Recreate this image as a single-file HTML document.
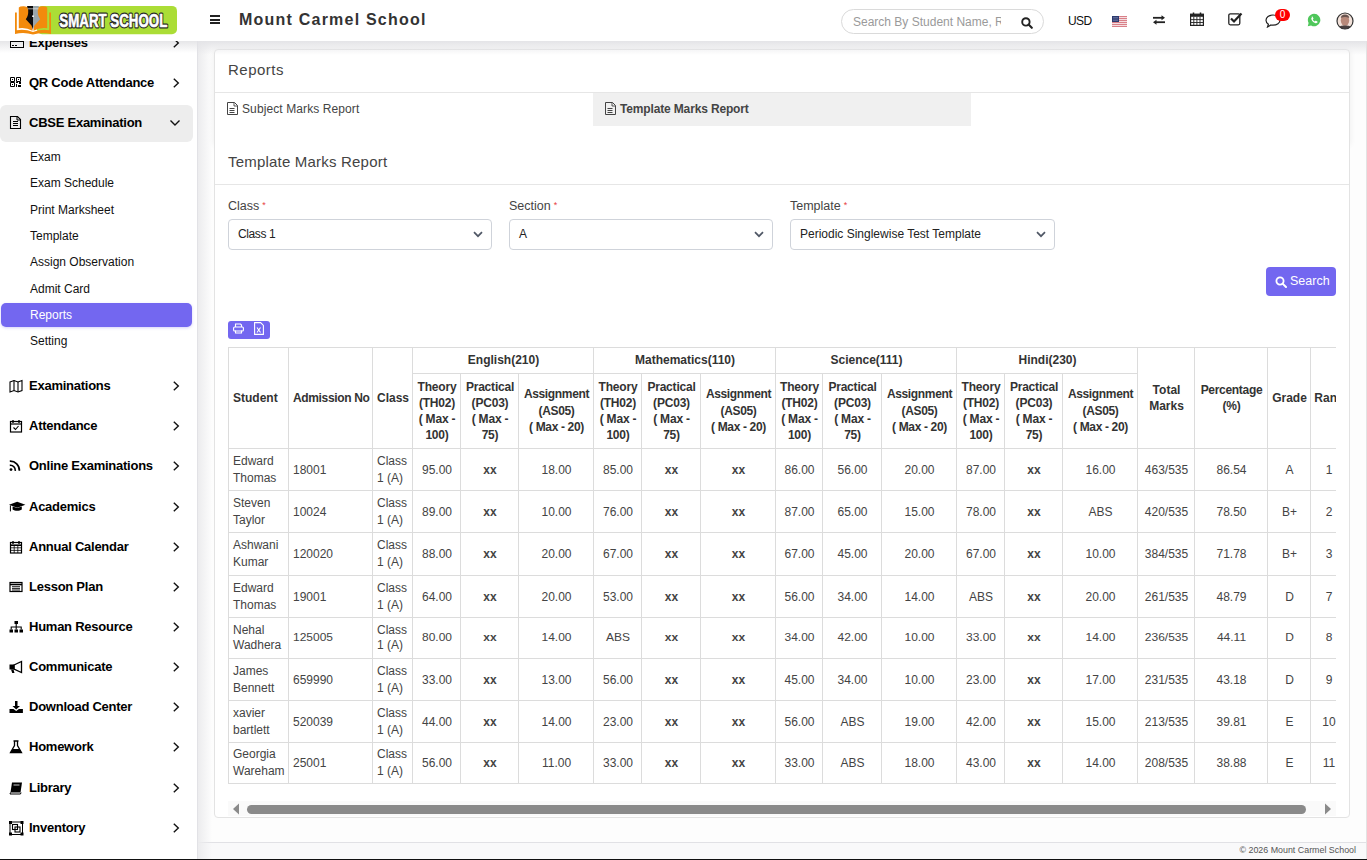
<!DOCTYPE html>
<html><head><meta charset="utf-8"><style>
*{box-sizing:border-box;margin:0;padding:0}
html,body{width:1367px;height:860px;overflow:hidden;background:#fdfdfd;font-family:"Liberation Sans",sans-serif;color:#333}
.a{position:absolute}
#hdr{position:absolute;left:0;top:0;width:1367px;height:41px;background:#fff;z-index:5}
#hdrsh{position:absolute;left:197px;top:41px;width:1170px;height:14px;background:linear-gradient(#e4e4e7,rgba(253,253,253,0));z-index:4}
#side{position:absolute;left:0;top:41px;width:197px;height:819px;background:#fff;z-index:3;overflow:hidden}
#sideb{position:absolute;left:197px;top:41px;width:1px;height:818px;background:#e2e2e6;z-index:4}
#sidesh{position:absolute;left:198px;top:41px;width:14px;height:818px;background:linear-gradient(90deg,#ececee,rgba(253,253,253,0));z-index:2}
#sidetopsh{position:absolute;left:0;top:0;width:197px;height:12px;background:linear-gradient(#e6e6e8,rgba(255,255,255,0))}
.mi{position:absolute;left:0;width:193px;height:37px;font-size:13px;font-weight:bold;color:#000;letter-spacing:-0.25px}
.mi svg.ic{position:absolute;left:9px;width:14px;height:14px}
.mi .tx{position:absolute;left:29px;line-height:16px;white-space:nowrap}
.mi svg.ch{position:absolute;left:172px;width:8px;height:10px}
.si{position:absolute;left:30px;font-size:12px;color:#111;line-height:15px;white-space:nowrap}
#box{position:absolute;left:214px;top:49px;width:1136px;height:769px;background:#fff;border:1px solid #e3e3e3;border-radius:4px;z-index:1}
#foot{position:absolute;left:198px;top:842px;width:1169px;height:17px;background:#f9f9fa;border-top:1px solid #e1e1e5;z-index:1}
#blk{position:absolute;left:0;top:859px;width:1367px;height:1px;background:#111;z-index:9}
</style></head><body>
<div id="hdr"><svg class="a" style="left:12px;top:3px" width="168" height="34" viewBox="0 0 168 34">
<rect x="25" y="2.9" width="140" height="28.3" rx="5" fill="#abdd36"/>
<path d="M3 9.5 L3 31 Q12 28.5 21 31.6 Q30 28.5 39 31 L39 9.5 L37.2 9.5 L37.2 27.2 Q29 25.8 21 29 Q13 25.8 4.8 27.2 L4.8 9.5 Z" fill="#f28a0c"/>
<path d="M6.8 4.5 Q8 3 12 3.2 Q17 3.6 19.5 7 L20.5 27.8 Q14 24 6.8 25.2 Z" fill="#f28a0c"/>
<path d="M35.2 4.5 Q34 3 30 3.2 Q25 3.6 22.5 7 L21.5 27.8 Q28 24 35.2 25.2 Z" fill="#f28a0c"/>
<path d="M15 3 H21 V26.5 L19.5 22.5 Q16 18.5 13.8 16.2 Q16.6 13 16.2 7 Z" fill="#0c0c0c"/>
<path d="M27 3 H21 V26.5 L22.5 22.5 Q26 18.5 28.2 16.2 Q25.4 13 25.8 7 Z" fill="#9aa6aa"/>
<path d="M15.5 5.8 H26.5" stroke="#e8e8e8" stroke-width="0.7"/>
<circle cx="21" cy="13.2" r="0.9" fill="#fff"/>
<text x="47.3" y="23.9" font-family="Liberation Sans" font-weight="bold" font-size="17.6" fill="#262626" stroke="#262626" stroke-width="3" stroke-linejoin="round" textLength="108" lengthAdjust="spacingAndGlyphs">SMART SCHOOL</text><text x="47.3" y="23.9" font-family="Liberation Sans" font-weight="bold" font-size="17.6" fill="#fff" stroke="#fff" stroke-width="0.6" stroke-linejoin="round" textLength="108" lengthAdjust="spacingAndGlyphs">SMART SCHOOL</text>
</svg><div class="a" style="left:210px;top:15px;width:10px;height:2px;background:#222"></div><div class="a" style="left:210px;top:18.5px;width:10px;height:2px;background:#222"></div><div class="a" style="left:210px;top:22px;width:10px;height:2px;background:#222"></div><div class="a" style="left:239px;top:11px;font-size:16px;font-weight:bold;letter-spacing:1.22px;color:#333;line-height:18px;white-space:nowrap">Mount Carmel School</div><div class="a" style="left:841px;top:9px;width:203px;height:25px;border:1px solid #dadada;border-radius:13px;background:#fff"></div><div class="a" style="left:853px;top:15px;width:148px;overflow:hidden;font-size:12px;color:#9a9a9a;line-height:15px;white-space:nowrap">Search By Student Name, Roll</div><svg class="a" style="left:1021px;top:17px" width="12" height="12" viewBox="0 0 12 12"><circle cx="4.9" cy="4.9" r="3.7" fill="none" stroke="#222" stroke-width="1.9"/><path d="M7.6 7.6 L10.8 10.8" stroke="#222" stroke-width="2.1" stroke-linecap="round"/></svg><div class="a" style="left:1068px;top:14px;font-size:12px;letter-spacing:-0.6px;color:#111;line-height:14px">USD</div><svg class="a" style="left:1112px;top:16px" width="15" height="11" viewBox="0 0 15 11"><rect x="0" y="0" width="15" height="1" fill="#d98088"/><rect x="0" y="1" width="15" height="1" fill="#f4dde0"/><rect x="0" y="2" width="15" height="1" fill="#d98088"/><rect x="0" y="3" width="15" height="1" fill="#f4dde0"/><rect x="0" y="4" width="15" height="1" fill="#d98088"/><rect x="0" y="5" width="15" height="1" fill="#f4dde0"/><rect x="0" y="6" width="15" height="1" fill="#d98088"/><rect x="0" y="7" width="15" height="1" fill="#f4dde0"/><rect x="0" y="8" width="15" height="1" fill="#d98088"/><rect x="0" y="9" width="15" height="1" fill="#f4dde0"/><rect x="0" y="10" width="15" height="1" fill="#d98088"/><rect x="0" y="11" width="15" height="1" fill="#f4dde0"/><rect x="0" y="0" width="7" height="6" fill="#2c3a6e"/><path d="M1 1.5h5M1 3h5M1 4.5h5" stroke="#8891b8" stroke-width="0.5"/></svg><svg class="a" style="left:1152px;top:15px" width="14" height="10" viewBox="0 0 14 10"><path d="M1 2.8h9" stroke="#222" stroke-width="1.8"/><path d="M9.5 0.3L13 2.8 9.5 5.3z" fill="#222"/><path d="M13 7.2h-9" stroke="#222" stroke-width="1.8"/><path d="M4.5 4.7L1 7.2 4.5 9.7z" fill="#222"/></svg><svg class="a" style="left:1190px;top:12px" width="14" height="14" viewBox="0 0 14 14"><rect x="0.6" y="2.2" width="12.8" height="11.2" fill="none" stroke="#222" stroke-width="1.2"/><rect x="0.6" y="2.2" width="12.8" height="2.6" fill="#222"/><path d="M3.5 0.5v3M10.5 0.5v3" stroke="#222" stroke-width="1.5"/><path d="M3.8 4.8v8.6M6.9 4.8v8.6M10 4.8v8.6M0.6 7.6h12.8M0.6 10.5h12.8" stroke="#222" stroke-width="0.9"/></svg><svg class="a" style="left:1228px;top:12px" width="15" height="14" viewBox="0 0 15 14"><rect x="0.8" y="1.8" width="11" height="11" rx="1.5" fill="none" stroke="#222" stroke-width="1.3"/><path d="M3 6.5l3 3 7.5-8" fill="none" stroke="#222" stroke-width="2.2"/></svg><svg class="a" style="left:1265px;top:13px" width="17" height="15" viewBox="0 0 17 15"><path d="M8 2C4 2 1 4.3 1 7.2c0 1.6 0.9 3 2.4 4L2.5 14 6 12c0.6 0.1 1.3 0.2 2 0.2 4 0 7-2.3 7-5S12 2 8 2z" fill="none" stroke="#222" stroke-width="1.2"/></svg><div class="a" style="left:1275px;top:9px;width:15px;height:12px;border-radius:6px;background:#ff0000;color:#fff;font-size:10px;line-height:12px;text-align:center">0</div><svg class="a" style="left:1307px;top:13px" width="14" height="14" viewBox="0 0 14 14"><path d="M7 0.8A6.2 6.2 0 0 0 1.6 10L0.8 13.2 4.1 12.4A6.2 6.2 0 1 0 7 0.8z" fill="#4fc75b"/><path d="M4.6 3.8c0.4-0.3 0.9-0.3 1.1 0.1l0.7 1.3c0.1 0.3 0 0.6-0.2 0.8l-0.4 0.4c0.4 0.9 1.1 1.6 2 2l0.4-0.4c0.2-0.2 0.5-0.3 0.8-0.2l1.3 0.7c0.4 0.2 0.4 0.7 0.1 1.1-0.6 0.7-1.4 0.9-2.3 0.5-1.6-0.7-2.9-2-3.6-3.6-0.4-0.9-0.2-1.8 0.5-2.3z" fill="#fff"/></svg><svg class="a" style="left:1336px;top:12px" width="18" height="18" viewBox="0 0 18 18"><defs><clipPath id="avc"><circle cx="9" cy="9" r="8"/></clipPath></defs><g clip-path="url(#avc)"><rect x="0" y="0" width="18" height="18" fill="#f3e2da"/><ellipse cx="9" cy="8.5" rx="4.2" ry="5.2" fill="#b8897a"/><path d="M4.8 6Q5 2.5 9 2.5Q13 2.5 13.2 6Q9 4.2 4.8 6z" fill="#6a5550"/><path d="M1 18Q2 13 9 13.5Q16 13 17 18z" fill="#4a4040"/></g><circle cx="9" cy="9" r="8" fill="none" stroke="#333" stroke-width="1.2"/></svg></div>
<div id="hdrsh"></div>
<div id="side"><div id="sidetopsh"></div><svg class="ic" style="position:absolute;left:9px;top:-5px;width:18px;height:14px;overflow:visible" viewBox="0 0 18 14"><rect x="1.5" y="5.5" width="13" height="6" fill="none" stroke="#000" stroke-width="1"/><path d="M3 9.5h2M6 9.5h2" stroke="#000" stroke-width="1"/></svg><div class="tx" style="position:absolute;left:29px;top:-6px;font-size:13px;font-weight:bold;color:#000;letter-spacing:-0.25px;line-height:16px;white-space:nowrap">Expenses</div><svg style="position:absolute;left:172px;top:-3px;width:8px;height:10px" viewBox="0 0 8 10"><path d="M1.8 0.7 L6.3 5 L1.8 9.3" fill="none" stroke="#111" stroke-width="1.4"/></svg><svg class="ic" style="position:absolute;left:9px;top:35px;width:18px;height:14px;overflow:visible" viewBox="0 0 18 14"><path d="M1.5 1.5h4v4h-4zM7.5 1.5h4v4h-4zM1.5 6.5h4v4h-4z" fill="none" stroke="#000" stroke-width="1"/><path d="M3 3h1v1H3zM9 3h1v1H9zM3 8h1v1H3zM7 6h2v1H7zM10 6h2v2h-2zM7 8h1v3H7zM9 9h3v2H9z" fill="#000"/></svg><div class="tx" style="position:absolute;left:29px;top:34px;font-size:13px;font-weight:bold;color:#000;letter-spacing:-0.25px;line-height:16px;white-space:nowrap">QR Code Attendance</div><svg style="position:absolute;left:172px;top:37px;width:8px;height:10px" viewBox="0 0 8 10"><path d="M1.8 0.7 L6.3 5 L1.8 9.3" fill="none" stroke="#111" stroke-width="1.4"/></svg><div class="a" style="left:0;top:64px;width:193px;height:37px;background:#ededed;border-radius:6px"></div><svg class="ic" style="position:absolute;left:9px;top:75px;width:18px;height:14px;overflow:visible" viewBox="0 0 18 14"><path d="M1.5 0.5h7l3 3v9h-10z" fill="none" stroke="#000" stroke-width="1.1"/><path d="M8 0.5v3.5h3.5" fill="none" stroke="#000" stroke-width="1"/><path d="M4 5.5h5M4 7.5h5M4 9.5h5" stroke="#000" stroke-width="1"/></svg><div class="tx" style="position:absolute;left:29px;top:74px;font-size:13px;font-weight:bold;color:#000;letter-spacing:-0.25px;line-height:16px;white-space:nowrap">CBSE Examination</div><svg style="position:absolute;left:169px;top:78px;width:12px;height:8px" viewBox="0 0 12 8"><path d="M1.5 1.5 L6 6 L10.5 1.5" fill="none" stroke="#111" stroke-width="1.4"/></svg><div class="a" style="left:30px;top:109px;font-size:12px;line-height:14px;color:#111;white-space:nowrap">Exam</div><div class="a" style="left:30px;top:135px;font-size:12px;line-height:14px;color:#111;white-space:nowrap">Exam Schedule</div><div class="a" style="left:30px;top:162px;font-size:12px;line-height:14px;color:#111;white-space:nowrap">Print Marksheet</div><div class="a" style="left:30px;top:188px;font-size:12px;line-height:14px;color:#111;white-space:nowrap">Template</div><div class="a" style="left:30px;top:214px;font-size:12px;line-height:14px;color:#111;white-space:nowrap">Assign Observation</div><div class="a" style="left:30px;top:241px;font-size:12px;line-height:14px;color:#111;white-space:nowrap">Admit Card</div><div class="a" style="left:1px;top:262px;width:191px;height:24px;background:#7367f0;border-radius:5px;box-shadow:0 1px 3px rgba(115,103,240,0.3)"></div><div class="a" style="left:30px;top:267px;font-size:12px;line-height:14px;color:#fff;white-space:nowrap">Reports</div><div class="a" style="left:30px;top:293px;font-size:12px;line-height:14px;color:#111;white-space:nowrap">Setting</div><svg class="ic" style="position:absolute;left:9px;top:338px;width:18px;height:14px;overflow:visible" viewBox="0 0 18 14"><path d="M1 3l4-1.5 4 1.5 4-1.5v10l-4 1.5-4-1.5-4 1.5z" fill="none" stroke="#000" stroke-width="1.1"/><path d="M5 1.5v10M9 3v10" stroke="#000" stroke-width="1.1"/></svg><div class="tx" style="position:absolute;left:29px;top:337px;font-size:13px;font-weight:bold;color:#000;letter-spacing:-0.25px;line-height:16px;white-space:nowrap">Examinations</div><svg style="position:absolute;left:172px;top:340px;width:8px;height:10px" viewBox="0 0 8 10"><path d="M1.8 0.7 L6.3 5 L1.8 9.3" fill="none" stroke="#111" stroke-width="1.4"/></svg><svg class="ic" style="position:absolute;left:9px;top:378px;width:18px;height:14px;overflow:visible" viewBox="0 0 18 14"><rect x="1.5" y="2.5" width="11" height="10.5" fill="none" stroke="#000" stroke-width="1.2"/><path d="M1.5 5h11" stroke="#000" stroke-width="1.2"/><path d="M4 1v3M10 1v3" stroke="#000" stroke-width="1.4"/><path d="M4.5 8.5l2 2 3-3.5" fill="none" stroke="#000" stroke-width="1.1"/></svg><div class="tx" style="position:absolute;left:29px;top:377px;font-size:13px;font-weight:bold;color:#000;letter-spacing:-0.25px;line-height:16px;white-space:nowrap">Attendance</div><svg style="position:absolute;left:172px;top:380px;width:8px;height:10px" viewBox="0 0 8 10"><path d="M1.8 0.7 L6.3 5 L1.8 9.3" fill="none" stroke="#111" stroke-width="1.4"/></svg><svg class="ic" style="position:absolute;left:9px;top:418px;width:18px;height:14px;overflow:visible" viewBox="0 0 18 14"><circle cx="2" cy="10.6" r="1.4" fill="#000"/><path d="M0.8 6.3a5 5 0 0 1 5.5 5.5" fill="none" stroke="#000" stroke-width="1.7"/><path d="M0.8 2.2a9.2 9.2 0 0 1 9.6 9.6" fill="none" stroke="#000" stroke-width="1.7"/></svg><div class="tx" style="position:absolute;left:29px;top:417px;font-size:13px;font-weight:bold;color:#000;letter-spacing:-0.25px;line-height:16px;white-space:nowrap">Online Examinations</div><svg style="position:absolute;left:172px;top:420px;width:8px;height:10px" viewBox="0 0 8 10"><path d="M1.8 0.7 L6.3 5 L1.8 9.3" fill="none" stroke="#111" stroke-width="1.4"/></svg><svg class="ic" style="position:absolute;left:9px;top:459px;width:18px;height:14px;overflow:visible" viewBox="0 0 18 14"><path d="M0 4.8L8.2 1.8 16.4 4.8 8.2 7.8z" fill="#000"/><path d="M3.6 6.4v3c2.4 1.8 6.8 1.8 9.2 0v-3l-4.6 1.7z" fill="#000"/><path d="M1.4 5.4v6" stroke="#000" stroke-width="1"/></svg><div class="tx" style="position:absolute;left:29px;top:458px;font-size:13px;font-weight:bold;color:#000;letter-spacing:-0.25px;line-height:16px;white-space:nowrap">Academics</div><svg style="position:absolute;left:172px;top:461px;width:8px;height:10px" viewBox="0 0 8 10"><path d="M1.8 0.7 L6.3 5 L1.8 9.3" fill="none" stroke="#111" stroke-width="1.4"/></svg><svg class="ic" style="position:absolute;left:9px;top:499px;width:18px;height:14px;overflow:visible" viewBox="0 0 18 14"><rect x="1.5" y="2.5" width="11" height="10.5" fill="none" stroke="#000" stroke-width="1.2"/><path d="M1.5 5.2h11" stroke="#000" stroke-width="1.6"/><path d="M4 1v3M10 1v3" stroke="#000" stroke-width="1.4"/><path d="M5.2 5v8M8.8 5v8M1.5 7.8h11M1.5 10.4h11" stroke="#000" stroke-width="0.8"/></svg><div class="tx" style="position:absolute;left:29px;top:498px;font-size:13px;font-weight:bold;color:#000;letter-spacing:-0.25px;line-height:16px;white-space:nowrap">Annual Calendar</div><svg style="position:absolute;left:172px;top:501px;width:8px;height:10px" viewBox="0 0 8 10"><path d="M1.8 0.7 L6.3 5 L1.8 9.3" fill="none" stroke="#111" stroke-width="1.4"/></svg><svg class="ic" style="position:absolute;left:9px;top:539px;width:18px;height:14px;overflow:visible" viewBox="0 0 18 14"><rect x="1" y="2.5" width="12" height="9" fill="none" stroke="#000" stroke-width="1.2"/><path d="M1 4.5h12" stroke="#000" stroke-width="1.6"/><path d="M3 6.7h8M3 8.4h8M3 10h8" stroke="#000" stroke-width="0.9"/></svg><div class="tx" style="position:absolute;left:29px;top:538px;font-size:13px;font-weight:bold;color:#000;letter-spacing:-0.25px;line-height:16px;white-space:nowrap">Lesson Plan</div><svg style="position:absolute;left:172px;top:541px;width:8px;height:10px" viewBox="0 0 8 10"><path d="M1.8 0.7 L6.3 5 L1.8 9.3" fill="none" stroke="#111" stroke-width="1.4"/></svg><svg class="ic" style="position:absolute;left:9px;top:579px;width:18px;height:14px;overflow:visible" viewBox="0 0 18 14"><rect x="5.5" y="1" width="3.5" height="3" fill="#000"/><rect x="0.5" y="9.5" width="3.5" height="3" fill="#000"/><rect x="5.5" y="9.5" width="3.5" height="3" fill="#000"/><rect x="10.5" y="9.5" width="3.5" height="3" fill="#000"/><path d="M7.2 4v5.5M2.2 9.5V7h10v2.5" fill="none" stroke="#000" stroke-width="1.1"/></svg><div class="tx" style="position:absolute;left:29px;top:578px;font-size:13px;font-weight:bold;color:#000;letter-spacing:-0.25px;line-height:16px;white-space:nowrap">Human Resource</div><svg style="position:absolute;left:172px;top:581px;width:8px;height:10px" viewBox="0 0 8 10"><path d="M1.8 0.7 L6.3 5 L1.8 9.3" fill="none" stroke="#111" stroke-width="1.4"/></svg><svg class="ic" style="position:absolute;left:9px;top:619px;width:18px;height:14px;overflow:visible" viewBox="0 0 18 14"><path d="M5 5l7.5-3.5v11L5 9z" fill="none" stroke="#000" stroke-width="1.3"/><path d="M0.5 4.5h5v5h-5z" fill="#000"/><path d="M2 9.5l1.2 3.5h2.3l-1-3.5z" fill="#000"/></svg><div class="tx" style="position:absolute;left:29px;top:618px;font-size:13px;font-weight:bold;color:#000;letter-spacing:-0.25px;line-height:16px;white-space:nowrap">Communicate</div><svg style="position:absolute;left:172px;top:621px;width:8px;height:10px" viewBox="0 0 8 10"><path d="M1.8 0.7 L6.3 5 L1.8 9.3" fill="none" stroke="#111" stroke-width="1.4"/></svg><svg class="ic" style="position:absolute;left:9px;top:659px;width:18px;height:14px;overflow:visible" viewBox="0 0 18 14"><path d="M6 1h2.5v5h2.5L7.2 9.5 3.5 6H6z" fill="#000"/><path d="M0.5 9h4l2.7 2 2.7-2h4v4h-13.4z" fill="#000"/></svg><div class="tx" style="position:absolute;left:29px;top:658px;font-size:13px;font-weight:bold;color:#000;letter-spacing:-0.25px;line-height:16px;white-space:nowrap">Download Center</div><svg style="position:absolute;left:172px;top:661px;width:8px;height:10px" viewBox="0 0 8 10"><path d="M1.8 0.7 L6.3 5 L1.8 9.3" fill="none" stroke="#111" stroke-width="1.4"/></svg><svg class="ic" style="position:absolute;left:9px;top:699px;width:18px;height:14px;overflow:visible" viewBox="0 0 18 14"><path d="M4.5 1h5M5.5 1v4.5L1.5 12.5h11l-4-7V1" fill="none" stroke="#000" stroke-width="1.3"/><path d="M3.5 9h7l2 3.5h-11z" fill="#000"/></svg><div class="tx" style="position:absolute;left:29px;top:698px;font-size:13px;font-weight:bold;color:#000;letter-spacing:-0.25px;line-height:16px;white-space:nowrap">Homework</div><svg style="position:absolute;left:172px;top:701px;width:8px;height:10px" viewBox="0 0 8 10"><path d="M1.8 0.7 L6.3 5 L1.8 9.3" fill="none" stroke="#111" stroke-width="1.4"/></svg><svg class="ic" style="position:absolute;left:9px;top:740px;width:18px;height:14px;overflow:visible" viewBox="0 0 18 14"><path d="M3 1.5h10l-1.5 10H1.5z" fill="#000"/><path d="M1.5 11.5l-0.5 1.5h10.5l0.5-1.5" fill="none" stroke="#000" stroke-width="1"/><path d="M4.5 4h6" stroke="#fff" stroke-width="0.8"/></svg><div class="tx" style="position:absolute;left:29px;top:739px;font-size:13px;font-weight:bold;color:#000;letter-spacing:-0.25px;line-height:16px;white-space:nowrap">Library</div><svg style="position:absolute;left:172px;top:742px;width:8px;height:10px" viewBox="0 0 8 10"><path d="M1.8 0.7 L6.3 5 L1.8 9.3" fill="none" stroke="#111" stroke-width="1.4"/></svg><svg class="ic" style="position:absolute;left:9px;top:780px;width:18px;height:14px;overflow:visible" viewBox="0 0 18 14"><rect x="1" y="1" width="12.5" height="12.5" fill="none" stroke="#000" stroke-width="1"/><rect x="3.5" y="3.5" width="5" height="5" fill="none" stroke="#000" stroke-width="1.1"/><rect x="6" y="6" width="5" height="5" fill="none" stroke="#000" stroke-width="1.1"/><path d="M0 0h3v3H0zM11.5 0h3v3h-3zM0 11.5h3v3H0zM11.5 11.5h3v3h-3z" fill="#000"/></svg><div class="tx" style="position:absolute;left:29px;top:779px;font-size:13px;font-weight:bold;color:#000;letter-spacing:-0.25px;line-height:16px;white-space:nowrap">Inventory</div><svg style="position:absolute;left:172px;top:782px;width:8px;height:10px" viewBox="0 0 8 10"><path d="M1.8 0.7 L6.3 5 L1.8 9.3" fill="none" stroke="#111" stroke-width="1.4"/></svg></div>
<div id="sideb"></div>
<div id="sidesh"></div>
<div id="box"></div><div class="a" style="left:214px;top:49px;width:1136px;height:96px;border-radius:4px;box-shadow:0 1px 6px rgba(0,0,0,0.07);z-index:0"></div><div class="a" style="left:228px;top:61px;font-size:15px;letter-spacing:0.5px;line-height:17px;color:#444;z-index:2">Reports</div><div class="a" style="left:215px;top:92px;width:1134px;height:1px;background:#e6e6e6;z-index:2"></div><svg class="a" style="left:227px;top:102px;z-index:2" width="11" height="13" viewBox="0 0 11 13"><path d="M0.5 0.5h7l3 3v9h-10z" fill="none" stroke="#444" stroke-width="1"/><path d="M7 0.5v3.5h3.5" fill="none" stroke="#444" stroke-width="0.9"/><path d="M2.5 6.5h5M2.5 8.5h5M2.5 10.5h5" stroke="#444" stroke-width="1"/></svg><div class="a" style="left:242px;top:102px;font-size:12px;line-height:14px;color:#444;z-index:2;letter-spacing:0.1px">Subject Marks Report</div><div class="a" style="left:593px;top:93px;width:378px;height:33px;background:#f0f0f0;z-index:2"></div><svg class="a" style="left:605px;top:102px;z-index:2" width="11" height="13" viewBox="0 0 11 13"><path d="M0.5 0.5h7l3 3v9h-10z" fill="none" stroke="#444" stroke-width="1"/><path d="M7 0.5v3.5h3.5" fill="none" stroke="#444" stroke-width="0.9"/><path d="M2.5 6.5h5M2.5 8.5h5M2.5 10.5h5" stroke="#444" stroke-width="1"/></svg><div class="a" style="left:620px;top:102px;font-size:12px;font-weight:bold;line-height:14px;color:#444;z-index:2;letter-spacing:-0.15px">Template Marks Report</div><div class="a" style="left:228px;top:153px;font-size:15px;line-height:17px;color:#444;z-index:2;letter-spacing:0.2px">Template Marks Report</div><div class="a" style="left:215px;top:184px;width:1134px;height:1px;background:#e6e6e6;z-index:2"></div><div class="a" style="left:228px;top:199px;font-size:12.5px;line-height:14px;color:#444;z-index:2;white-space:nowrap">Class<span style="color:#e64040;font-size:9px;position:relative;top:-2px;margin-left:3px">*</span></div><div class="a" style="left:228px;top:219px;width:264px;height:31px;border:1px solid #cfd3da;border-radius:4px;background:#fff;z-index:2"></div><div class="a" style="left:238px;top:227px;font-size:12px;line-height:14px;color:#222;z-index:2;white-space:nowrap;letter-spacing:-0.4px">Class 1</div><svg class="a" style="left:473px;top:231px;z-index:2" width="10" height="7" viewBox="0 0 10 7"><path d="M1 1.2L5 5.2 9 1.2" fill="none" stroke="#505866" stroke-width="1.7"/></svg><div class="a" style="left:509px;top:199px;font-size:12.5px;line-height:14px;color:#444;z-index:2;white-space:nowrap">Section<span style="color:#e64040;font-size:9px;position:relative;top:-2px;margin-left:3px">*</span></div><div class="a" style="left:509px;top:219px;width:264px;height:31px;border:1px solid #cfd3da;border-radius:4px;background:#fff;z-index:2"></div><div class="a" style="left:519px;top:227px;font-size:12px;line-height:14px;color:#222;z-index:2;white-space:nowrap;letter-spacing:0px">A</div><svg class="a" style="left:754px;top:231px;z-index:2" width="10" height="7" viewBox="0 0 10 7"><path d="M1 1.2L5 5.2 9 1.2" fill="none" stroke="#505866" stroke-width="1.7"/></svg><div class="a" style="left:790px;top:199px;font-size:12.5px;line-height:14px;color:#444;z-index:2;white-space:nowrap">Template<span style="color:#e64040;font-size:9px;position:relative;top:-2px;margin-left:3px">*</span></div><div class="a" style="left:790px;top:219px;width:265px;height:31px;border:1px solid #cfd3da;border-radius:4px;background:#fff;z-index:2"></div><div class="a" style="left:800px;top:227px;font-size:12px;line-height:14px;color:#222;z-index:2;white-space:nowrap;letter-spacing:0px">Periodic Singlewise Test Template</div><svg class="a" style="left:1036px;top:231px;z-index:2" width="10" height="7" viewBox="0 0 10 7"><path d="M1 1.2L5 5.2 9 1.2" fill="none" stroke="#505866" stroke-width="1.7"/></svg><div class="a" style="left:1266px;top:267px;width:70px;height:29px;background:#7367f0;border-radius:4px;z-index:2"></div><svg class="a" style="left:1275px;top:276px;z-index:3" width="12" height="12" viewBox="0 0 12 12"><circle cx="5" cy="5" r="3.6" fill="none" stroke="#fff" stroke-width="1.8"/><path d="M7.6 7.6L11 11" stroke="#fff" stroke-width="2" stroke-linecap="round"/></svg><div class="a" style="left:1290px;top:274px;font-size:12.5px;line-height:14px;color:#fff;z-index:3">Search</div><div class="a" style="left:228px;top:321px;width:42px;height:18px;background:#7367f0;border-radius:3px;z-index:2"></div><svg class="a" style="left:233px;top:323px;z-index:3" width="11" height="11" viewBox="0 0 11 11"><path d="M2.5 4V1h5l1 1v2" fill="none" stroke="#fff" stroke-width="1.1"/><rect x="0.6" y="4" width="9.8" height="4" rx="1" fill="none" stroke="#fff" stroke-width="1.1"/><path d="M2.5 7.5v2.5h6V7.5" fill="none" stroke="#fff" stroke-width="1.1"/></svg><svg class="a" style="left:254px;top:322px;z-index:3" width="10" height="13" viewBox="0 0 10 13"><path d="M0.6 0.6h6l2.8 2.8v9H0.6z" fill="none" stroke="#fff" stroke-width="1.1"/><path d="M3 5.5l3.5 5M6.5 5.5L3 10.5" stroke="#fff" stroke-width="1.1"/></svg>
<div class="a" style="left:228px;top:347px;width:1108px;height:437px;overflow:hidden;z-index:2"><div class="a" style="left:0px;top:0px;width:1122px;height:1px;background:#dcdcdc"></div><div class="a" style="left:184px;top:26px;width:725px;height:1px;background:#dcdcdc"></div><div class="a" style="left:0px;top:101px;width:1122px;height:1px;background:#dcdcdc"></div><div class="a" style="left:0px;top:143px;width:1122px;height:1px;background:#dcdcdc"></div><div class="a" style="left:0px;top:185px;width:1122px;height:1px;background:#dcdcdc"></div><div class="a" style="left:0px;top:228px;width:1122px;height:1px;background:#dcdcdc"></div><div class="a" style="left:0px;top:270px;width:1122px;height:1px;background:#dcdcdc"></div><div class="a" style="left:0px;top:311px;width:1122px;height:1px;background:#dcdcdc"></div><div class="a" style="left:0px;top:353px;width:1122px;height:1px;background:#dcdcdc"></div><div class="a" style="left:0px;top:395px;width:1122px;height:1px;background:#dcdcdc"></div><div class="a" style="left:0px;top:436px;width:1122px;height:1px;background:#dcdcdc"></div><div class="a" style="left:0px;top:0px;width:1px;height:437px;background:#dcdcdc"></div><div class="a" style="left:60px;top:0px;width:1px;height:437px;background:#dcdcdc"></div><div class="a" style="left:144px;top:0px;width:1px;height:437px;background:#dcdcdc"></div><div class="a" style="left:184px;top:0px;width:1px;height:437px;background:#dcdcdc"></div><div class="a" style="left:232px;top:26px;width:1px;height:411px;background:#dcdcdc"></div><div class="a" style="left:290px;top:26px;width:1px;height:411px;background:#dcdcdc"></div><div class="a" style="left:365px;top:0px;width:1px;height:437px;background:#dcdcdc"></div><div class="a" style="left:413px;top:26px;width:1px;height:411px;background:#dcdcdc"></div><div class="a" style="left:472px;top:26px;width:1px;height:411px;background:#dcdcdc"></div><div class="a" style="left:547px;top:0px;width:1px;height:437px;background:#dcdcdc"></div><div class="a" style="left:594px;top:26px;width:1px;height:411px;background:#dcdcdc"></div><div class="a" style="left:653px;top:26px;width:1px;height:411px;background:#dcdcdc"></div><div class="a" style="left:728px;top:0px;width:1px;height:437px;background:#dcdcdc"></div><div class="a" style="left:776px;top:26px;width:1px;height:411px;background:#dcdcdc"></div><div class="a" style="left:834px;top:26px;width:1px;height:411px;background:#dcdcdc"></div><div class="a" style="left:909px;top:0px;width:1px;height:437px;background:#dcdcdc"></div><div class="a" style="left:966px;top:0px;width:1px;height:437px;background:#dcdcdc"></div><div class="a" style="left:1039px;top:0px;width:1px;height:437px;background:#dcdcdc"></div><div class="a" style="left:1082px;top:0px;width:1px;height:437px;background:#dcdcdc"></div><div class="a" style="left:1122px;top:0px;width:1px;height:437px;background:#dcdcdc"></div><div class="a" style="left:5px;top:43.0px;width:55px;text-align:left;font-size:12px;line-height:16px;color:#333;font-weight:bold;white-space:nowrap">Student</div><div class="a" style="left:65px;top:43.0px;width:79px;text-align:left;font-size:12px;line-height:16px;color:#333;font-weight:bold;letter-spacing:-0.35px;white-space:nowrap">Admission No</div><div class="a" style="left:149px;top:43.0px;width:35px;text-align:left;font-size:12px;line-height:16px;color:#333;font-weight:bold;white-space:nowrap">Class</div><div class="a" style="left:185px;top:4.5px;width:181px;text-align:center;font-size:12px;line-height:16px;color:#333;font-weight:bold;white-space:nowrap">English(210)</div><div class="a" style="left:366px;top:4.5px;width:182px;text-align:center;font-size:12px;line-height:16px;color:#333;font-weight:bold;white-space:nowrap">Mathematics(110)</div><div class="a" style="left:548px;top:4.5px;width:181px;text-align:center;font-size:12px;line-height:16px;color:#333;font-weight:bold;white-space:nowrap">Science(111)</div><div class="a" style="left:729px;top:4.5px;width:181px;text-align:center;font-size:12px;line-height:16px;color:#333;font-weight:bold;white-space:nowrap">Hindi(230)</div><div class="a" style="left:185px;top:32.0px;width:48px;text-align:center;font-size:12px;line-height:16px;color:#333;font-weight:bold;letter-spacing:-0.2px;white-space:nowrap">Theory<br>(TH02)<br>( Max -<br>100)</div><div class="a" style="left:233px;top:32.0px;width:58px;text-align:center;font-size:12px;line-height:16px;color:#333;font-weight:bold;letter-spacing:-0.2px;white-space:nowrap">Practical<br>(PC03)<br>( Max -<br>75)</div><div class="a" style="left:291px;top:39.2px;width:75px;text-align:center;font-size:12px;line-height:16.5px;color:#333;font-weight:bold;letter-spacing:-0.35px;white-space:nowrap">Assignment<br>(AS05)<br>( Max - 20)</div><div class="a" style="left:366px;top:32.0px;width:48px;text-align:center;font-size:12px;line-height:16px;color:#333;font-weight:bold;letter-spacing:-0.2px;white-space:nowrap">Theory<br>(TH02)<br>( Max -<br>100)</div><div class="a" style="left:414px;top:32.0px;width:59px;text-align:center;font-size:12px;line-height:16px;color:#333;font-weight:bold;letter-spacing:-0.2px;white-space:nowrap">Practical<br>(PC03)<br>( Max -<br>75)</div><div class="a" style="left:473px;top:39.2px;width:75px;text-align:center;font-size:12px;line-height:16.5px;color:#333;font-weight:bold;letter-spacing:-0.35px;white-space:nowrap">Assignment<br>(AS05)<br>( Max - 20)</div><div class="a" style="left:548px;top:32.0px;width:47px;text-align:center;font-size:12px;line-height:16px;color:#333;font-weight:bold;letter-spacing:-0.2px;white-space:nowrap">Theory<br>(TH02)<br>( Max -<br>100)</div><div class="a" style="left:595px;top:32.0px;width:59px;text-align:center;font-size:12px;line-height:16px;color:#333;font-weight:bold;letter-spacing:-0.2px;white-space:nowrap">Practical<br>(PC03)<br>( Max -<br>75)</div><div class="a" style="left:654px;top:39.2px;width:75px;text-align:center;font-size:12px;line-height:16.5px;color:#333;font-weight:bold;letter-spacing:-0.35px;white-space:nowrap">Assignment<br>(AS05)<br>( Max - 20)</div><div class="a" style="left:729px;top:32.0px;width:48px;text-align:center;font-size:12px;line-height:16px;color:#333;font-weight:bold;letter-spacing:-0.2px;white-space:nowrap">Theory<br>(TH02)<br>( Max -<br>100)</div><div class="a" style="left:777px;top:32.0px;width:58px;text-align:center;font-size:12px;line-height:16px;color:#333;font-weight:bold;letter-spacing:-0.2px;white-space:nowrap">Practical<br>(PC03)<br>( Max -<br>75)</div><div class="a" style="left:835px;top:39.2px;width:75px;text-align:center;font-size:12px;line-height:16.5px;color:#333;font-weight:bold;letter-spacing:-0.35px;white-space:nowrap">Assignment<br>(AS05)<br>( Max - 20)</div><div class="a" style="left:910px;top:35.0px;width:57px;text-align:center;font-size:12px;line-height:16px;color:#333;font-weight:bold;white-space:nowrap">Total<br>Marks</div><div class="a" style="left:967px;top:35.0px;width:73px;text-align:center;font-size:12px;line-height:16px;color:#333;font-weight:bold;letter-spacing:-0.3px;white-space:nowrap">Percentage<br>(%)</div><div class="a" style="left:1040px;top:43.0px;width:43px;text-align:center;font-size:12px;line-height:16px;color:#333;font-weight:bold;white-space:nowrap">Grade</div><div class="a" style="left:1083px;top:43.0px;width:36px;text-align:center;font-size:12px;line-height:16px;color:#333;font-weight:bold;white-space:nowrap">Rank</div><div class="a" style="left:5px;top:105.5px;width:55px;text-align:left;font-size:12px;line-height:17px;color:#444;white-space:nowrap">Edward<br>Thomas</div><div class="a" style="left:65px;top:114.5px;width:79px;text-align:left;font-size:12px;line-height:16px;color:#444;white-space:nowrap">18001</div><div class="a" style="left:149px;top:105.5px;width:35px;text-align:left;font-size:12px;line-height:17px;color:#444;white-space:nowrap">Class<br>1 (A)</div><div class="a" style="left:185px;top:114.5px;width:48px;text-align:center;font-size:12px;line-height:16px;color:#444;white-space:nowrap">95.00</div><div class="a" style="left:233px;top:114.5px;width:58px;text-align:center;font-size:12px;line-height:16px;color:#444;font-weight:bold;white-space:nowrap">xx</div><div class="a" style="left:291px;top:114.5px;width:75px;text-align:center;font-size:12px;line-height:16px;color:#444;white-space:nowrap">18.00</div><div class="a" style="left:366px;top:114.5px;width:48px;text-align:center;font-size:12px;line-height:16px;color:#444;white-space:nowrap">85.00</div><div class="a" style="left:414px;top:114.5px;width:59px;text-align:center;font-size:12px;line-height:16px;color:#444;font-weight:bold;white-space:nowrap">xx</div><div class="a" style="left:473px;top:114.5px;width:75px;text-align:center;font-size:12px;line-height:16px;color:#444;font-weight:bold;white-space:nowrap">xx</div><div class="a" style="left:548px;top:114.5px;width:47px;text-align:center;font-size:12px;line-height:16px;color:#444;white-space:nowrap">86.00</div><div class="a" style="left:595px;top:114.5px;width:59px;text-align:center;font-size:12px;line-height:16px;color:#444;white-space:nowrap">56.00</div><div class="a" style="left:654px;top:114.5px;width:75px;text-align:center;font-size:12px;line-height:16px;color:#444;white-space:nowrap">20.00</div><div class="a" style="left:729px;top:114.5px;width:48px;text-align:center;font-size:12px;line-height:16px;color:#444;white-space:nowrap">87.00</div><div class="a" style="left:777px;top:114.5px;width:58px;text-align:center;font-size:12px;line-height:16px;color:#444;font-weight:bold;white-space:nowrap">xx</div><div class="a" style="left:835px;top:114.5px;width:75px;text-align:center;font-size:12px;line-height:16px;color:#444;white-space:nowrap">16.00</div><div class="a" style="left:910px;top:114.5px;width:57px;text-align:center;font-size:12px;line-height:16px;color:#444;white-space:nowrap">463/535</div><div class="a" style="left:967px;top:114.5px;width:73px;text-align:center;font-size:12px;line-height:16px;color:#444;white-space:nowrap">86.54</div><div class="a" style="left:1040px;top:114.5px;width:43px;text-align:center;font-size:12px;line-height:16px;color:#444;white-space:nowrap">A</div><div class="a" style="left:1083px;top:114.5px;width:36px;text-align:center;font-size:12px;line-height:16px;color:#444;white-space:nowrap">1</div><div class="a" style="left:5px;top:147.5px;width:55px;text-align:left;font-size:12px;line-height:17px;color:#444;white-space:nowrap">Steven<br>Taylor</div><div class="a" style="left:65px;top:156.5px;width:79px;text-align:left;font-size:12px;line-height:16px;color:#444;white-space:nowrap">10024</div><div class="a" style="left:149px;top:147.5px;width:35px;text-align:left;font-size:12px;line-height:17px;color:#444;white-space:nowrap">Class<br>1 (A)</div><div class="a" style="left:185px;top:156.5px;width:48px;text-align:center;font-size:12px;line-height:16px;color:#444;white-space:nowrap">89.00</div><div class="a" style="left:233px;top:156.5px;width:58px;text-align:center;font-size:12px;line-height:16px;color:#444;font-weight:bold;white-space:nowrap">xx</div><div class="a" style="left:291px;top:156.5px;width:75px;text-align:center;font-size:12px;line-height:16px;color:#444;white-space:nowrap">10.00</div><div class="a" style="left:366px;top:156.5px;width:48px;text-align:center;font-size:12px;line-height:16px;color:#444;white-space:nowrap">76.00</div><div class="a" style="left:414px;top:156.5px;width:59px;text-align:center;font-size:12px;line-height:16px;color:#444;font-weight:bold;white-space:nowrap">xx</div><div class="a" style="left:473px;top:156.5px;width:75px;text-align:center;font-size:12px;line-height:16px;color:#444;font-weight:bold;white-space:nowrap">xx</div><div class="a" style="left:548px;top:156.5px;width:47px;text-align:center;font-size:12px;line-height:16px;color:#444;white-space:nowrap">87.00</div><div class="a" style="left:595px;top:156.5px;width:59px;text-align:center;font-size:12px;line-height:16px;color:#444;white-space:nowrap">65.00</div><div class="a" style="left:654px;top:156.5px;width:75px;text-align:center;font-size:12px;line-height:16px;color:#444;white-space:nowrap">15.00</div><div class="a" style="left:729px;top:156.5px;width:48px;text-align:center;font-size:12px;line-height:16px;color:#444;white-space:nowrap">78.00</div><div class="a" style="left:777px;top:156.5px;width:58px;text-align:center;font-size:12px;line-height:16px;color:#444;font-weight:bold;white-space:nowrap">xx</div><div class="a" style="left:835px;top:156.5px;width:75px;text-align:center;font-size:12px;line-height:16px;color:#444;white-space:nowrap">ABS</div><div class="a" style="left:910px;top:156.5px;width:57px;text-align:center;font-size:12px;line-height:16px;color:#444;white-space:nowrap">420/535</div><div class="a" style="left:967px;top:156.5px;width:73px;text-align:center;font-size:12px;line-height:16px;color:#444;white-space:nowrap">78.50</div><div class="a" style="left:1040px;top:156.5px;width:43px;text-align:center;font-size:12px;line-height:16px;color:#444;white-space:nowrap">B+</div><div class="a" style="left:1083px;top:156.5px;width:36px;text-align:center;font-size:12px;line-height:16px;color:#444;white-space:nowrap">2</div><div class="a" style="left:5px;top:190.0px;width:55px;text-align:left;font-size:12px;line-height:17px;color:#444;white-space:nowrap">Ashwani<br>Kumar</div><div class="a" style="left:65px;top:199.0px;width:79px;text-align:left;font-size:12px;line-height:16px;color:#444;white-space:nowrap">120020</div><div class="a" style="left:149px;top:190.0px;width:35px;text-align:left;font-size:12px;line-height:17px;color:#444;white-space:nowrap">Class<br>1 (A)</div><div class="a" style="left:185px;top:199.0px;width:48px;text-align:center;font-size:12px;line-height:16px;color:#444;white-space:nowrap">88.00</div><div class="a" style="left:233px;top:199.0px;width:58px;text-align:center;font-size:12px;line-height:16px;color:#444;font-weight:bold;white-space:nowrap">xx</div><div class="a" style="left:291px;top:199.0px;width:75px;text-align:center;font-size:12px;line-height:16px;color:#444;white-space:nowrap">20.00</div><div class="a" style="left:366px;top:199.0px;width:48px;text-align:center;font-size:12px;line-height:16px;color:#444;white-space:nowrap">67.00</div><div class="a" style="left:414px;top:199.0px;width:59px;text-align:center;font-size:12px;line-height:16px;color:#444;font-weight:bold;white-space:nowrap">xx</div><div class="a" style="left:473px;top:199.0px;width:75px;text-align:center;font-size:12px;line-height:16px;color:#444;font-weight:bold;white-space:nowrap">xx</div><div class="a" style="left:548px;top:199.0px;width:47px;text-align:center;font-size:12px;line-height:16px;color:#444;white-space:nowrap">67.00</div><div class="a" style="left:595px;top:199.0px;width:59px;text-align:center;font-size:12px;line-height:16px;color:#444;white-space:nowrap">45.00</div><div class="a" style="left:654px;top:199.0px;width:75px;text-align:center;font-size:12px;line-height:16px;color:#444;white-space:nowrap">20.00</div><div class="a" style="left:729px;top:199.0px;width:48px;text-align:center;font-size:12px;line-height:16px;color:#444;white-space:nowrap">67.00</div><div class="a" style="left:777px;top:199.0px;width:58px;text-align:center;font-size:12px;line-height:16px;color:#444;font-weight:bold;white-space:nowrap">xx</div><div class="a" style="left:835px;top:199.0px;width:75px;text-align:center;font-size:12px;line-height:16px;color:#444;white-space:nowrap">10.00</div><div class="a" style="left:910px;top:199.0px;width:57px;text-align:center;font-size:12px;line-height:16px;color:#444;white-space:nowrap">384/535</div><div class="a" style="left:967px;top:199.0px;width:73px;text-align:center;font-size:12px;line-height:16px;color:#444;white-space:nowrap">71.78</div><div class="a" style="left:1040px;top:199.0px;width:43px;text-align:center;font-size:12px;line-height:16px;color:#444;white-space:nowrap">B+</div><div class="a" style="left:1083px;top:199.0px;width:36px;text-align:center;font-size:12px;line-height:16px;color:#444;white-space:nowrap">3</div><div class="a" style="left:5px;top:232.5px;width:55px;text-align:left;font-size:12px;line-height:17px;color:#444;white-space:nowrap">Edward<br>Thomas</div><div class="a" style="left:65px;top:241.5px;width:79px;text-align:left;font-size:12px;line-height:16px;color:#444;white-space:nowrap">19001</div><div class="a" style="left:149px;top:232.5px;width:35px;text-align:left;font-size:12px;line-height:17px;color:#444;white-space:nowrap">Class<br>1 (A)</div><div class="a" style="left:185px;top:241.5px;width:48px;text-align:center;font-size:12px;line-height:16px;color:#444;white-space:nowrap">64.00</div><div class="a" style="left:233px;top:241.5px;width:58px;text-align:center;font-size:12px;line-height:16px;color:#444;font-weight:bold;white-space:nowrap">xx</div><div class="a" style="left:291px;top:241.5px;width:75px;text-align:center;font-size:12px;line-height:16px;color:#444;white-space:nowrap">20.00</div><div class="a" style="left:366px;top:241.5px;width:48px;text-align:center;font-size:12px;line-height:16px;color:#444;white-space:nowrap">53.00</div><div class="a" style="left:414px;top:241.5px;width:59px;text-align:center;font-size:12px;line-height:16px;color:#444;font-weight:bold;white-space:nowrap">xx</div><div class="a" style="left:473px;top:241.5px;width:75px;text-align:center;font-size:12px;line-height:16px;color:#444;font-weight:bold;white-space:nowrap">xx</div><div class="a" style="left:548px;top:241.5px;width:47px;text-align:center;font-size:12px;line-height:16px;color:#444;white-space:nowrap">56.00</div><div class="a" style="left:595px;top:241.5px;width:59px;text-align:center;font-size:12px;line-height:16px;color:#444;white-space:nowrap">34.00</div><div class="a" style="left:654px;top:241.5px;width:75px;text-align:center;font-size:12px;line-height:16px;color:#444;white-space:nowrap">14.00</div><div class="a" style="left:729px;top:241.5px;width:48px;text-align:center;font-size:12px;line-height:16px;color:#444;white-space:nowrap">ABS</div><div class="a" style="left:777px;top:241.5px;width:58px;text-align:center;font-size:12px;line-height:16px;color:#444;font-weight:bold;white-space:nowrap">xx</div><div class="a" style="left:835px;top:241.5px;width:75px;text-align:center;font-size:12px;line-height:16px;color:#444;white-space:nowrap">20.00</div><div class="a" style="left:910px;top:241.5px;width:57px;text-align:center;font-size:12px;line-height:16px;color:#444;white-space:nowrap">261/535</div><div class="a" style="left:967px;top:241.5px;width:73px;text-align:center;font-size:12px;line-height:16px;color:#444;white-space:nowrap">48.79</div><div class="a" style="left:1040px;top:241.5px;width:43px;text-align:center;font-size:12px;line-height:16px;color:#444;white-space:nowrap">D</div><div class="a" style="left:1083px;top:241.5px;width:36px;text-align:center;font-size:12px;line-height:16px;color:#444;white-space:nowrap">7</div><div class="a" style="left:5px;top:276.3px;width:55px;text-align:left;font-size:12px;line-height:14.7px;color:#444;white-space:nowrap">Nehal<br>Wadhera</div><div class="a" style="left:65px;top:283.0px;width:79px;text-align:left;font-size:12px;line-height:16px;color:#444;transform:scaleY(0.86);white-space:nowrap">125005</div><div class="a" style="left:149px;top:276.3px;width:35px;text-align:left;font-size:12px;line-height:14.7px;color:#444;white-space:nowrap">Class<br>1 (A)</div><div class="a" style="left:185px;top:283.0px;width:48px;text-align:center;font-size:12px;line-height:16px;color:#444;transform:scaleY(0.86);white-space:nowrap">80.00</div><div class="a" style="left:233px;top:283.0px;width:58px;text-align:center;font-size:12px;line-height:16px;color:#444;font-weight:bold;transform:scaleY(0.86);white-space:nowrap">xx</div><div class="a" style="left:291px;top:283.0px;width:75px;text-align:center;font-size:12px;line-height:16px;color:#444;transform:scaleY(0.86);white-space:nowrap">14.00</div><div class="a" style="left:366px;top:283.0px;width:48px;text-align:center;font-size:12px;line-height:16px;color:#444;transform:scaleY(0.86);white-space:nowrap">ABS</div><div class="a" style="left:414px;top:283.0px;width:59px;text-align:center;font-size:12px;line-height:16px;color:#444;font-weight:bold;transform:scaleY(0.86);white-space:nowrap">xx</div><div class="a" style="left:473px;top:283.0px;width:75px;text-align:center;font-size:12px;line-height:16px;color:#444;font-weight:bold;transform:scaleY(0.86);white-space:nowrap">xx</div><div class="a" style="left:548px;top:283.0px;width:47px;text-align:center;font-size:12px;line-height:16px;color:#444;transform:scaleY(0.86);white-space:nowrap">34.00</div><div class="a" style="left:595px;top:283.0px;width:59px;text-align:center;font-size:12px;line-height:16px;color:#444;transform:scaleY(0.86);white-space:nowrap">42.00</div><div class="a" style="left:654px;top:283.0px;width:75px;text-align:center;font-size:12px;line-height:16px;color:#444;transform:scaleY(0.86);white-space:nowrap">10.00</div><div class="a" style="left:729px;top:283.0px;width:48px;text-align:center;font-size:12px;line-height:16px;color:#444;transform:scaleY(0.86);white-space:nowrap">33.00</div><div class="a" style="left:777px;top:283.0px;width:58px;text-align:center;font-size:12px;line-height:16px;color:#444;font-weight:bold;transform:scaleY(0.86);white-space:nowrap">xx</div><div class="a" style="left:835px;top:283.0px;width:75px;text-align:center;font-size:12px;line-height:16px;color:#444;transform:scaleY(0.86);white-space:nowrap">14.00</div><div class="a" style="left:910px;top:283.0px;width:57px;text-align:center;font-size:12px;line-height:16px;color:#444;transform:scaleY(0.86);white-space:nowrap">236/535</div><div class="a" style="left:967px;top:283.0px;width:73px;text-align:center;font-size:12px;line-height:16px;color:#444;transform:scaleY(0.86);white-space:nowrap">44.11</div><div class="a" style="left:1040px;top:283.0px;width:43px;text-align:center;font-size:12px;line-height:16px;color:#444;transform:scaleY(0.86);white-space:nowrap">D</div><div class="a" style="left:1083px;top:283.0px;width:36px;text-align:center;font-size:12px;line-height:16px;color:#444;transform:scaleY(0.86);white-space:nowrap">8</div><div class="a" style="left:5px;top:315.5px;width:55px;text-align:left;font-size:12px;line-height:17px;color:#444;white-space:nowrap">James<br>Bennett</div><div class="a" style="left:65px;top:324.5px;width:79px;text-align:left;font-size:12px;line-height:16px;color:#444;white-space:nowrap">659990</div><div class="a" style="left:149px;top:315.5px;width:35px;text-align:left;font-size:12px;line-height:17px;color:#444;white-space:nowrap">Class<br>1 (A)</div><div class="a" style="left:185px;top:324.5px;width:48px;text-align:center;font-size:12px;line-height:16px;color:#444;white-space:nowrap">33.00</div><div class="a" style="left:233px;top:324.5px;width:58px;text-align:center;font-size:12px;line-height:16px;color:#444;font-weight:bold;white-space:nowrap">xx</div><div class="a" style="left:291px;top:324.5px;width:75px;text-align:center;font-size:12px;line-height:16px;color:#444;white-space:nowrap">13.00</div><div class="a" style="left:366px;top:324.5px;width:48px;text-align:center;font-size:12px;line-height:16px;color:#444;white-space:nowrap">56.00</div><div class="a" style="left:414px;top:324.5px;width:59px;text-align:center;font-size:12px;line-height:16px;color:#444;font-weight:bold;white-space:nowrap">xx</div><div class="a" style="left:473px;top:324.5px;width:75px;text-align:center;font-size:12px;line-height:16px;color:#444;font-weight:bold;white-space:nowrap">xx</div><div class="a" style="left:548px;top:324.5px;width:47px;text-align:center;font-size:12px;line-height:16px;color:#444;white-space:nowrap">45.00</div><div class="a" style="left:595px;top:324.5px;width:59px;text-align:center;font-size:12px;line-height:16px;color:#444;white-space:nowrap">34.00</div><div class="a" style="left:654px;top:324.5px;width:75px;text-align:center;font-size:12px;line-height:16px;color:#444;white-space:nowrap">10.00</div><div class="a" style="left:729px;top:324.5px;width:48px;text-align:center;font-size:12px;line-height:16px;color:#444;white-space:nowrap">23.00</div><div class="a" style="left:777px;top:324.5px;width:58px;text-align:center;font-size:12px;line-height:16px;color:#444;font-weight:bold;white-space:nowrap">xx</div><div class="a" style="left:835px;top:324.5px;width:75px;text-align:center;font-size:12px;line-height:16px;color:#444;white-space:nowrap">17.00</div><div class="a" style="left:910px;top:324.5px;width:57px;text-align:center;font-size:12px;line-height:16px;color:#444;white-space:nowrap">231/535</div><div class="a" style="left:967px;top:324.5px;width:73px;text-align:center;font-size:12px;line-height:16px;color:#444;white-space:nowrap">43.18</div><div class="a" style="left:1040px;top:324.5px;width:43px;text-align:center;font-size:12px;line-height:16px;color:#444;white-space:nowrap">D</div><div class="a" style="left:1083px;top:324.5px;width:36px;text-align:center;font-size:12px;line-height:16px;color:#444;white-space:nowrap">9</div><div class="a" style="left:5px;top:357.5px;width:55px;text-align:left;font-size:12px;line-height:17px;color:#444;white-space:nowrap">xavier<br>bartlett</div><div class="a" style="left:65px;top:366.5px;width:79px;text-align:left;font-size:12px;line-height:16px;color:#444;white-space:nowrap">520039</div><div class="a" style="left:149px;top:357.5px;width:35px;text-align:left;font-size:12px;line-height:17px;color:#444;white-space:nowrap">Class<br>1 (A)</div><div class="a" style="left:185px;top:366.5px;width:48px;text-align:center;font-size:12px;line-height:16px;color:#444;white-space:nowrap">44.00</div><div class="a" style="left:233px;top:366.5px;width:58px;text-align:center;font-size:12px;line-height:16px;color:#444;font-weight:bold;white-space:nowrap">xx</div><div class="a" style="left:291px;top:366.5px;width:75px;text-align:center;font-size:12px;line-height:16px;color:#444;white-space:nowrap">14.00</div><div class="a" style="left:366px;top:366.5px;width:48px;text-align:center;font-size:12px;line-height:16px;color:#444;white-space:nowrap">23.00</div><div class="a" style="left:414px;top:366.5px;width:59px;text-align:center;font-size:12px;line-height:16px;color:#444;font-weight:bold;white-space:nowrap">xx</div><div class="a" style="left:473px;top:366.5px;width:75px;text-align:center;font-size:12px;line-height:16px;color:#444;font-weight:bold;white-space:nowrap">xx</div><div class="a" style="left:548px;top:366.5px;width:47px;text-align:center;font-size:12px;line-height:16px;color:#444;white-space:nowrap">56.00</div><div class="a" style="left:595px;top:366.5px;width:59px;text-align:center;font-size:12px;line-height:16px;color:#444;white-space:nowrap">ABS</div><div class="a" style="left:654px;top:366.5px;width:75px;text-align:center;font-size:12px;line-height:16px;color:#444;white-space:nowrap">19.00</div><div class="a" style="left:729px;top:366.5px;width:48px;text-align:center;font-size:12px;line-height:16px;color:#444;white-space:nowrap">42.00</div><div class="a" style="left:777px;top:366.5px;width:58px;text-align:center;font-size:12px;line-height:16px;color:#444;font-weight:bold;white-space:nowrap">xx</div><div class="a" style="left:835px;top:366.5px;width:75px;text-align:center;font-size:12px;line-height:16px;color:#444;white-space:nowrap">15.00</div><div class="a" style="left:910px;top:366.5px;width:57px;text-align:center;font-size:12px;line-height:16px;color:#444;white-space:nowrap">213/535</div><div class="a" style="left:967px;top:366.5px;width:73px;text-align:center;font-size:12px;line-height:16px;color:#444;white-space:nowrap">39.81</div><div class="a" style="left:1040px;top:366.5px;width:43px;text-align:center;font-size:12px;line-height:16px;color:#444;white-space:nowrap">E</div><div class="a" style="left:1083px;top:366.5px;width:36px;text-align:center;font-size:12px;line-height:16px;color:#444;white-space:nowrap">10</div><div class="a" style="left:5px;top:399.0px;width:55px;text-align:left;font-size:12px;line-height:17px;color:#444;white-space:nowrap">Georgia<br>Wareham</div><div class="a" style="left:65px;top:408.0px;width:79px;text-align:left;font-size:12px;line-height:16px;color:#444;white-space:nowrap">25001</div><div class="a" style="left:149px;top:399.0px;width:35px;text-align:left;font-size:12px;line-height:17px;color:#444;white-space:nowrap">Class<br>1 (A)</div><div class="a" style="left:185px;top:408.0px;width:48px;text-align:center;font-size:12px;line-height:16px;color:#444;white-space:nowrap">56.00</div><div class="a" style="left:233px;top:408.0px;width:58px;text-align:center;font-size:12px;line-height:16px;color:#444;font-weight:bold;white-space:nowrap">xx</div><div class="a" style="left:291px;top:408.0px;width:75px;text-align:center;font-size:12px;line-height:16px;color:#444;white-space:nowrap">11.00</div><div class="a" style="left:366px;top:408.0px;width:48px;text-align:center;font-size:12px;line-height:16px;color:#444;white-space:nowrap">33.00</div><div class="a" style="left:414px;top:408.0px;width:59px;text-align:center;font-size:12px;line-height:16px;color:#444;font-weight:bold;white-space:nowrap">xx</div><div class="a" style="left:473px;top:408.0px;width:75px;text-align:center;font-size:12px;line-height:16px;color:#444;font-weight:bold;white-space:nowrap">xx</div><div class="a" style="left:548px;top:408.0px;width:47px;text-align:center;font-size:12px;line-height:16px;color:#444;white-space:nowrap">33.00</div><div class="a" style="left:595px;top:408.0px;width:59px;text-align:center;font-size:12px;line-height:16px;color:#444;white-space:nowrap">ABS</div><div class="a" style="left:654px;top:408.0px;width:75px;text-align:center;font-size:12px;line-height:16px;color:#444;white-space:nowrap">18.00</div><div class="a" style="left:729px;top:408.0px;width:48px;text-align:center;font-size:12px;line-height:16px;color:#444;white-space:nowrap">43.00</div><div class="a" style="left:777px;top:408.0px;width:58px;text-align:center;font-size:12px;line-height:16px;color:#444;font-weight:bold;white-space:nowrap">xx</div><div class="a" style="left:835px;top:408.0px;width:75px;text-align:center;font-size:12px;line-height:16px;color:#444;white-space:nowrap">14.00</div><div class="a" style="left:910px;top:408.0px;width:57px;text-align:center;font-size:12px;line-height:16px;color:#444;white-space:nowrap">208/535</div><div class="a" style="left:967px;top:408.0px;width:73px;text-align:center;font-size:12px;line-height:16px;color:#444;white-space:nowrap">38.88</div><div class="a" style="left:1040px;top:408.0px;width:43px;text-align:center;font-size:12px;line-height:16px;color:#444;white-space:nowrap">E</div><div class="a" style="left:1083px;top:408.0px;width:36px;text-align:center;font-size:12px;line-height:16px;color:#444;white-space:nowrap">11</div></div><div class="a" style="left:228px;top:801px;width:1108px;height:15px;background:#fafafa;z-index:2"></div><svg class="a" style="left:232px;top:803px;z-index:3" width="8" height="12" viewBox="0 0 8 12"><path d="M7 0.5L1 6 7 11.5z" fill="#8a8a8a"/></svg><div class="a" style="left:247px;top:805px;width:1059px;height:9px;background:#8a8a8a;border-radius:4.5px;z-index:3"></div><svg class="a" style="left:1324px;top:803px;z-index:3" width="8" height="12" viewBox="0 0 8 12"><path d="M1 0.5L7 6 1 11.5z" fill="#8a8a8a"/></svg>
<div id="foot"></div><div class="a" style="left:1100px;top:845px;width:256px;text-align:right;font-size:8.9px;line-height:11px;color:#555;z-index:2;white-space:nowrap">© 2026 Mount Carmel School</div><div id="blk"></div><div class="a" style="left:1366px;top:41px;width:1px;height:818px;background:#e3e3e3;z-index:6"></div>
</body></html>
